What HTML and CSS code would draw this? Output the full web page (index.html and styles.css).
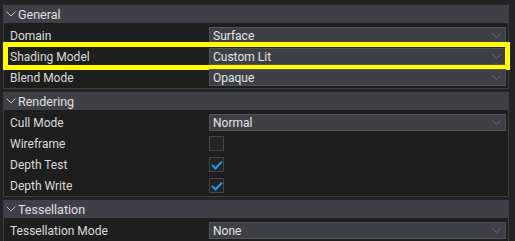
FILE: index.html
```html
<!DOCTYPE html>
<html lang="en">
<head>
    <meta charset="UTF-8">
    <title>Material Properties</title>
    <link rel="stylesheet" href="styles.css">
</head>
<body>
    <div class="panel">
        <div class="group">
            <div class="group-header">
                <svg class="arrow" width="10" height="6" viewBox="0 0 10 6"><path d="M0.5 0.5 L5 5 L9.5 0.5" /></svg>
                <span>General</span>
            </div>
            <div class="group-body">
                <div class="row">
                    <div class="label">Domain</div>
                    <div class="value"><div class="dropdown">Surface<svg class="chev" width="9" height="5" viewBox="0 0 9 5"><path d="M0.5 0.5 L4.5 4.5 L8.5 0.5" /></svg></div></div>
                </div>
                <div class="row highlighted">
                    <div class="label">Shading Model</div>
                    <div class="value"><div class="dropdown">Custom Lit<svg class="chev" width="9" height="5" viewBox="0 0 9 5"><path d="M0.5 0.5 L4.5 4.5 L8.5 0.5" /></svg></div></div>
                </div>
                <div class="row">
                    <div class="label">Blend Mode</div>
                    <div class="value"><div class="dropdown">Opaque<svg class="chev" width="9" height="5" viewBox="0 0 9 5"><path d="M0.5 0.5 L4.5 4.5 L8.5 0.5" /></svg></div></div>
                </div>
            </div>
        </div>

        <div class="group">
            <div class="group-header">
                <svg class="arrow" width="10" height="6" viewBox="0 0 10 6"><path d="M0.5 0.5 L5 5 L9.5 0.5" /></svg>
                <span>Rendering</span>
            </div>
            <div class="group-body">
                <div class="row">
                    <div class="label">Cull Mode</div>
                    <div class="value"><div class="dropdown">Normal<svg class="chev" width="9" height="5" viewBox="0 0 9 5"><path d="M0.5 0.5 L4.5 4.5 L8.5 0.5" /></svg></div></div>
                </div>
                <div class="row">
                    <div class="label">Wireframe</div>
                    <div class="value"><div class="checkbox"></div></div>
                </div>
                <div class="row">
                    <div class="label">Depth Test</div>
                    <div class="value"><div class="checkbox"><svg width="12" height="10" viewBox="0 0 12 10"><path d="M1 5 L4.5 8.5 L11 1.5" /></svg></div></div>
                </div>
                <div class="row">
                    <div class="label">Depth Write</div>
                    <div class="value"><div class="checkbox"><svg width="12" height="10" viewBox="0 0 12 10"><path d="M1 5 L4.5 8.5 L11 1.5" /></svg></div></div>
                </div>
            </div>
        </div>

        <div class="group">
            <div class="group-header">
                <svg class="arrow" width="10" height="6" viewBox="0 0 10 6"><path d="M0.5 0.5 L5 5 L9.5 0.5" /></svg>
                <span>Tessellation</span>
            </div>
            <div class="group-body">
                <div class="row">
                    <div class="label">Tessellation Mode</div>
                    <div class="value"><div class="dropdown">None<svg class="chev" width="9" height="5" viewBox="0 0 9 5"><path d="M0.5 0.5 L4.5 4.5 L8.5 0.5" /></svg></div></div>
                </div>
            </div>
        </div>
    </div>
</body>
</html>
```
FILE: styles.css
```css
* {
    margin: 0;
    padding: 0;
    box-sizing: border-box;
}

body {
    background: #232323;
    color: #e0e0e0;
    font-family: Roboto, 'Liberation Sans', sans-serif;
    font-size: 12px;
    width: 515px;
    height: 241px;
    overflow: hidden;
}

.panel {
    padding: 5px 6px 0 3px;
    display: flex;
    flex-direction: column;
    gap: 3px;
}

.group-header {
    height: 18px;
    background: #3f3f46;
    display: flex;
    align-items: center;
    gap: 2px;
    padding-left: 3px;
    font-size: 12.5px;
}

.arrow path {
    fill: none;
    stroke: #c8c8c8;
    stroke-width: 1;
}

.group-body {
    background: #1e1e1e;
    border: 1px solid #404040;
    border-top: none;
    padding-top: 2px;
}

.row {
    height: 21px;
    display: flex;
    align-items: center;
    position: relative;
}

.row.highlighted::after {
    content: '';
    position: absolute;
    left: -1px;
    right: -2px;
    top: -4px;
    bottom: -3px;
    border: 5px solid #ffff00;
}

.label {
    width: 205px;
    padding-left: 6px;
    color: #dcdcdc;
}

.value {
    flex: 1;
    padding-right: 2px;
    display: flex;
    align-items: center;
}

.dropdown {
    flex: 1;
    height: 17px;
    background: #3f3f46;
    border: 1px solid #53535a;
    display: flex;
    align-items: center;
    justify-content: space-between;
    padding: 0 4px 0 3px;
    color: #e6e6e6;
}

.chev path {
    fill: none;
    stroke: #6a6a6e;
    stroke-width: 1;
}

.checkbox {
    width: 15px;
    height: 15px;
    background: #232323;
    border: 1px solid #454545;
    display: flex;
    align-items: center;
    justify-content: center;
}

.checkbox path {
    fill: none;
    stroke: #1d9bf0;
    stroke-width: 2;
}
```
